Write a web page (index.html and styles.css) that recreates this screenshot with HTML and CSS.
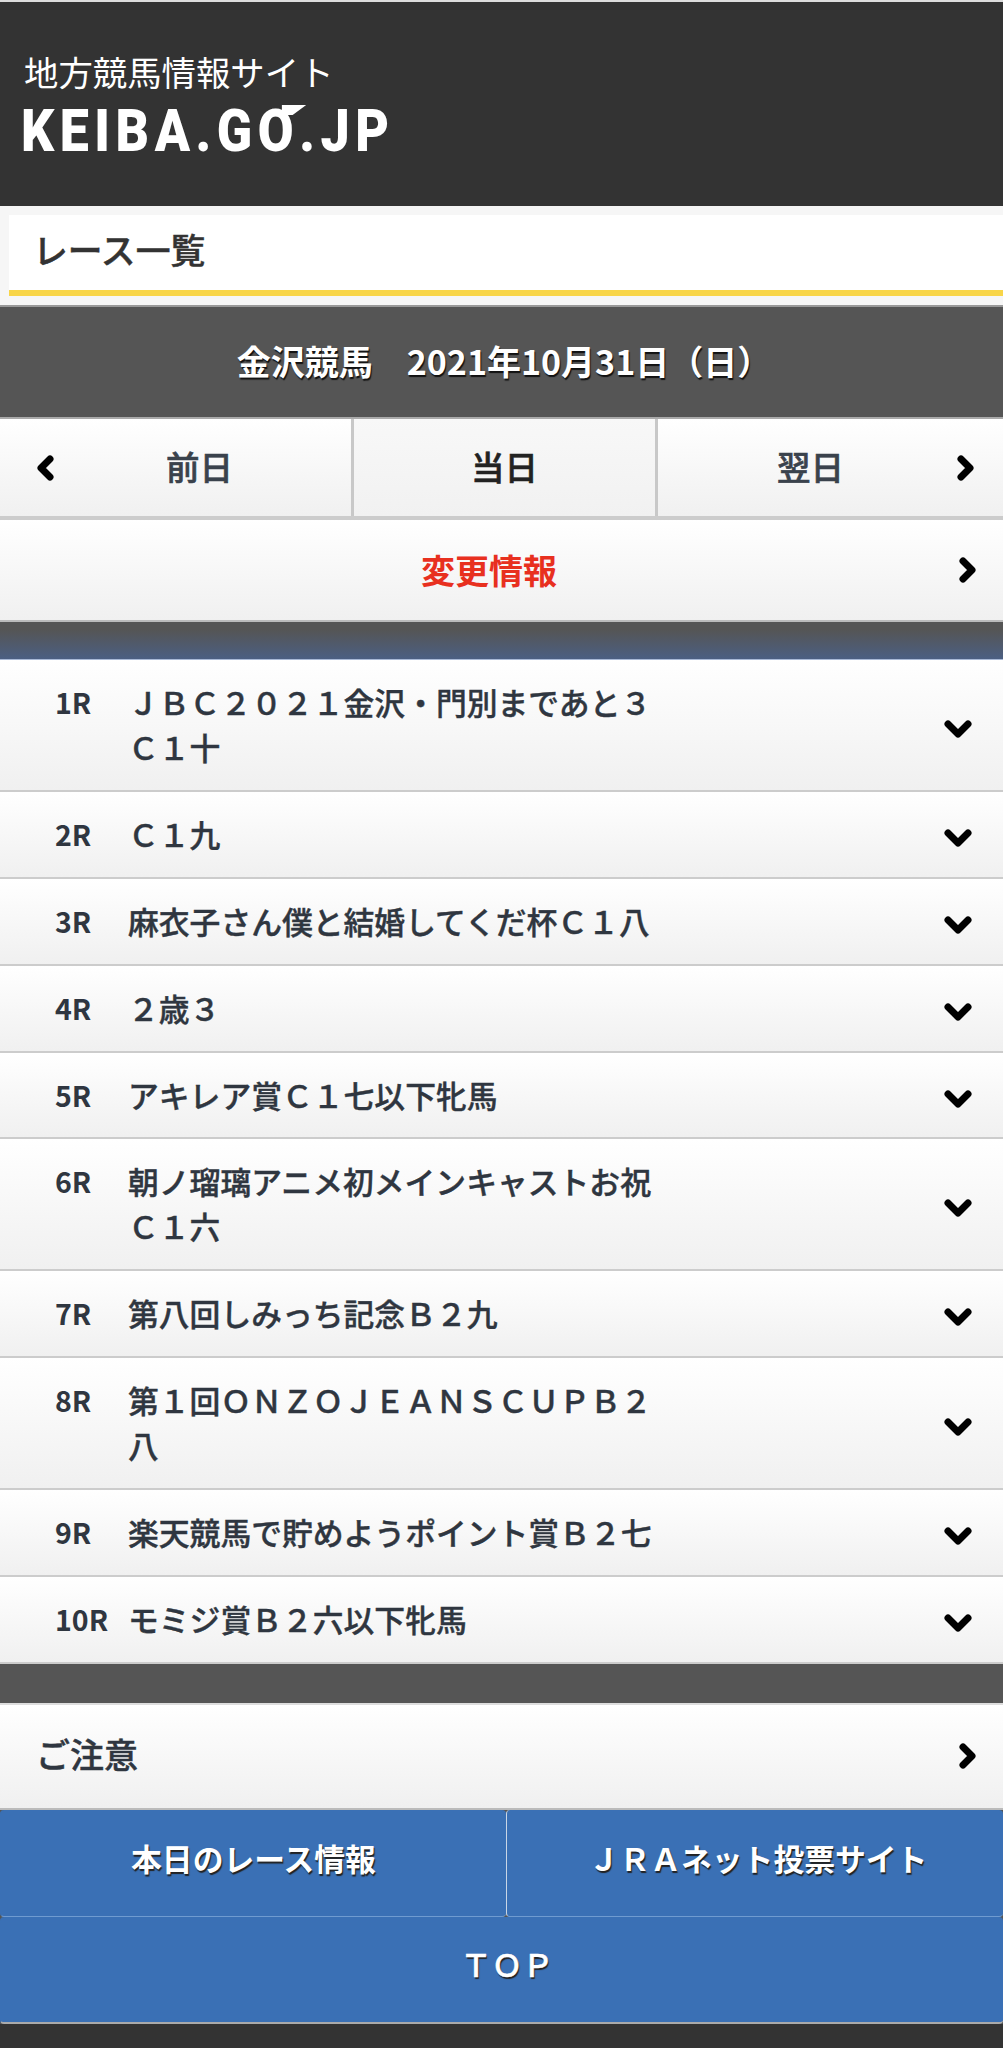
FILE: index.html
```html
<!DOCTYPE html>
<html lang="ja">
<head>
  <meta charset="UTF-8" />
  <meta name="viewport" content="width=device-width, initial-scale=1.0"/>
  <title>レース一覧</title>
  <link rel="stylesheet" href="styles.css">
</head>
<body>
  <header class="site-header">
    <p class="site-sub">地方競馬情報サイト</p>
    <p class="site-logo">KEIBA.G<span class="logo-o">O</span>.JP</p>
  </header>

  <div class="title-wrap">
    <h1 class="page-title">レース一覧</h1>
  </div>

  <h2 class="date-bar">金沢競馬　2021年10月31日（日）</h2>

  <nav class="day-nav">
    <a class="day prev">
      <svg class="chev" viewBox="0 0 20 30"><path d="M14 6 5 15l9 9"/></svg>
      <span>前日</span>
    </a>
    <a class="day current"><span>当日</span></a>
    <a class="day next">
      <span>翌日</span>
      <svg class="chev" viewBox="0 0 20 30"><path d="M6 6l9 9-9 9"/></svg>
    </a>
  </nav>

  <a class="change-row">
    <span>変更情報</span>
    <svg class="chev chev-end" viewBox="0 0 20 30"><path d="M6 6l9 9-9 9"/></svg>
  </a>

  <div class="blue-gap"></div>

  <ul class="race-list">
    <li class="race"><b>1R</b><span class="race-name">ＪＢＣ２０２１金沢・門別まであと３Ｃ１十</span><svg class="down" viewBox="0 0 30 20"><path d="M5 5l10 10L25 5"/></svg></li>
    <li class="race"><b>2R</b><span class="race-name">Ｃ１九</span><svg class="down" viewBox="0 0 30 20"><path d="M5 5l10 10L25 5"/></svg></li>
    <li class="race"><b>3R</b><span class="race-name">麻衣子さん僕と結婚してくだ杯Ｃ１八</span><svg class="down" viewBox="0 0 30 20"><path d="M5 5l10 10L25 5"/></svg></li>
    <li class="race"><b>4R</b><span class="race-name">２歳３</span><svg class="down" viewBox="0 0 30 20"><path d="M5 5l10 10L25 5"/></svg></li>
    <li class="race"><b>5R</b><span class="race-name">アキレア賞Ｃ１七以下牝馬</span><svg class="down" viewBox="0 0 30 20"><path d="M5 5l10 10L25 5"/></svg></li>
    <li class="race"><b>6R</b><span class="race-name">朝ノ瑠璃アニメ初メインキャストお祝Ｃ１六</span><svg class="down" viewBox="0 0 30 20"><path d="M5 5l10 10L25 5"/></svg></li>
    <li class="race"><b>7R</b><span class="race-name">第八回しみっち記念Ｂ２九</span><svg class="down" viewBox="0 0 30 20"><path d="M5 5l10 10L25 5"/></svg></li>
    <li class="race"><b>8R</b><span class="race-name">第１回ＯＮＺＯＪＥＡＮＳＣＵＰＢ２八</span><svg class="down" viewBox="0 0 30 20"><path d="M5 5l10 10L25 5"/></svg></li>
    <li class="race"><b>9R</b><span class="race-name">楽天競馬で貯めようポイント賞Ｂ２七</span><svg class="down" viewBox="0 0 30 20"><path d="M5 5l10 10L25 5"/></svg></li>
    <li class="race"><b>10R</b><span class="race-name">モミジ賞Ｂ２六以下牝馬</span><svg class="down" viewBox="0 0 30 20"><path d="M5 5l10 10L25 5"/></svg></li>
  </ul>

  <div class="dark-gap"></div>

  <a class="notice-row">
    <span>ご注意</span>
    <svg class="chev chev-end" viewBox="0 0 20 30"><path d="M6 6l9 9-9 9"/></svg>
  </a>

  <div class="footer-links">
    <a class="blue-btn">本日のレース情報</a>
    <a class="blue-btn">ＪＲＡネット投票サイト</a>
    <a class="blue-btn wide">ＴＯＰ</a>
  </div>

  <footer class="site-footer"></footer>
</body>
</html>
```

FILE: styles.css
```css
* {
  box-sizing: border-box;
}

body {
  margin: 0;
  height: 2048px;
  overflow: hidden;
  background-color: #333;
  font-family: "Noto Sans CJK JP", "Noto Sans", sans-serif;
  color: #2f3640;
}

a {
  display: block;
  color: inherit;
}

.site-header {
  height: 206px;
  padding: 49px 0 0 24px;
  background-color: #333;
  border-top: 2px solid #ddd;
  color: #fff;
}

.site-sub {
  margin: 0;
  font-size: 34.4px;
  line-height: 40px;
}

.site-logo {
  margin: 10px 0 0 -3px;
  font-family: "Roboto", sans-serif;
  font-weight: 900;
  font-size: 59px;
  line-height: 60px;
  letter-spacing: 6.3px;
  transform: scaleX(0.88);
  transform-origin: left;
}

.logo-o {
  position: relative;
}

.logo-o::after {
  content: "";
  position: absolute;
  right: -8px;
  top: 9px;
  width: 28px;
  height: 10px;
  background-color: #fff;
  clip-path: polygon(0 0, 100% 0, 45% 100%, 0 100%);
}

.title-wrap {
  height: 99px;
  padding: 9px 0 9px 9px;
  background-color: #f6f6f6;
}

.page-title {
  height: 81px;
  margin: 0;
  padding-left: 24px;
  background-color: #fff;
  border-bottom: 6px solid #f8d548;
  font-size: 34.8px;
  font-weight: 500;
  line-height: 69px;
  color: #333;
  -webkit-text-stroke: 0.5px #333;
}

.date-bar {
  height: 114px;
  margin: 0;
  padding-left: 5px;
  background-color: #555;
  border-top: 2px solid #999;
  border-bottom: 2px solid #aaa;
  color: #fff;
  font-size: 34px;
  font-weight: 700;
  line-height: 107px;
  text-align: center;
  text-shadow: 1px 2px 1px #111;
}

.day-nav {
  display: grid;
  grid-template-columns: 354px 304px 345px;
  height: 101px;
  border-bottom: 4px solid #ccc;
}

.day {
  display: flex;
  align-items: center;
  background: linear-gradient(#fff, #f0f0f0);
  border-right: 3px solid #c8c8c8;
  font-size: 33.5px;
  font-weight: 500;
  color: #3a424c;
  -webkit-text-stroke: 0.6px currentColor;
}

.day span {
  flex: 1;
  margin-top: -4px;
  text-align: center;
}

.day.prev {
  padding: 0 8px 0 36px;
}

.day.current {
  background: linear-gradient(#f8f8f8, #f1f1f1);
  color: #222;
}

.day.next {
  padding: 0 28px 0 8px;
  border-right: none;
}

.chev {
  flex: none;
  width: 20px;
  height: 30px;
  fill: none;
  stroke: #000;
  stroke-width: 7;
  stroke-linecap: round;
  stroke-linejoin: round;
}

.change-row {
  position: relative;
  height: 102px;
  padding-right: 25px;
  background: linear-gradient(#fff, #f0f0f0);
  border-bottom: 2px solid #bbb;
  color: #e8301f;
  font-size: 34px;
  font-weight: 700;
  line-height: 100px;
  text-align: center;
}

.chev-end {
  position: absolute;
  right: 26px;
  top: calc(50% - 15px);
}

.blue-gap {
  height: 38px;
  background: linear-gradient(#555 20%, #4b5f82);
  border-bottom: 1px solid #a9b9d6;
}

.race-list {
  margin: 0;
  padding: 0;
  list-style: none;
}

.race {
  display: flex;
  align-items: center;
  padding: 19px 30px 20.9px 0;
  background: linear-gradient(#fff, #f0f0f0);
  border-bottom: 2px solid #ccc;
  font-size: 30.8px;
  font-weight: 500;
  line-height: 45px;
  -webkit-text-stroke: 0.4px currentColor;
}

.race b {
  flex: none;
  align-self: flex-start;
  width: 128px;
  padding-left: 55px;
  font-size: 28.5px;
  font-weight: 700;
  -webkit-text-stroke: 0;
}

.race-name {
  flex: none;
  width: 530px;
}

.down {
  flex: none;
  width: 30px;
  height: 20px;
  margin: 9px 0 0 auto;
  fill: none;
  stroke: #000;
  stroke-width: 7;
  stroke-linecap: round;
  stroke-linejoin: round;
}

.dark-gap {
  height: 39px;
  background-color: #555;
}

.notice-row {
  position: relative;
  height: 107px;
  padding-left: 36px;
  background: linear-gradient(#fff, #f0f0f0);
  border-top: 2px solid #ddd;
  border-bottom: 2px solid #bbb;
  font-size: 34px;
  font-weight: 500;
  line-height: 98px;
  -webkit-text-stroke: 0.5px currentColor;
}

.footer-links {
  display: grid;
  grid-template-columns: 506px 497px;
  background-color: #555;
}

.blue-btn {
  height: 107px;
  padding-top: 1px;
  background-color: #3a70b5;
  border-bottom: 1px solid #6f9bd0;
  border-left: 1px solid #3a70b5;
  border-radius: 4px;
  color: #fff;
  font-size: 30.8px;
  font-weight: 700;
  line-height: 94px;
  text-align: center;
  text-shadow: 1px 2px 1px #222;
}

.blue-btn:nth-child(2) {
  padding-left: 6px;
  border-left: 1px solid #c9d6e6;
}

.blue-btn.wide {
  grid-column: 1 / 3;
  padding-left: 10px;
  border-bottom: 2px solid #aaa;
  font-size: 31px;
  font-weight: 500;
  line-height: 92px;
  -webkit-text-stroke: 0.4px #fff;
}

.site-footer {
  height: 26px;
  background-color: #333;
}
```
